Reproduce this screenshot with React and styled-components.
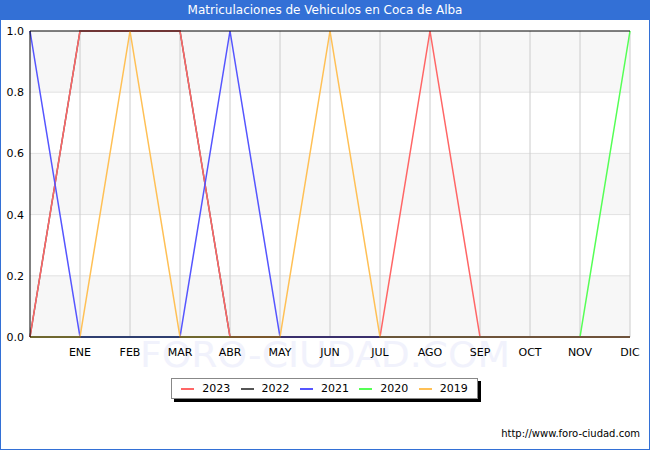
import React from "react";
import styled, { createGlobalStyle } from "styled-components";

const Global = createGlobalStyle`
  html, body { margin: 0; padding: 0; background: #fff; }
  body { font-family: "DejaVu Sans", sans-serif; }
`;

const Frame = styled.div`
  width: 650px; height: 450px; box-sizing: border-box;
  border: 1px solid #3370d6; position: relative; background: #fff;
  display: flex; flex-direction: column;
`;
const TitleBar = styled.div`
  height: 20px; background: #3370d6; color: #fff;
  font-size: 12px; display: flex; align-items: center; justify-content: center;
  margin: -1px -1px 0;
`;
const Chart = styled.svg`
  display: block; position: absolute; left: -1px; top: -20px;
`;
const Body = styled.div`
  flex: 1; position: relative;
`;
const Legend = styled.div`
  position: absolute; left: 170px; top: 358px; width: 307px; height: 21px;
  border: 1px solid #888; background: #fff; box-shadow: 3px 3px 0 #000;
  display: flex; align-items: center; justify-content: space-around;
  padding: 0 4px; box-sizing: border-box; font-size: 11px; color: #000;
`;
const Item = styled.div` display: flex; align-items: center; gap: 8px; `;
const Swatch = styled.span`
  width: 13px; height: 2px; background: ${p => p.c}; display: inline-block;
`;
const Footer = styled.div`
  position: absolute; right: 9px; bottom: 10px; font-size: 10px; color: #000;
`;

const X0 = 30, DX = 50, Y0 = 337, Y1 = 31;
const xs = i => X0 + i * DX;
const ys = v => Y0 - v * (Y0 - Y1);
const months = ["ENE","FEB","MAR","ABR","MAY","JUN","JUL","AGO","SEP","OCT","NOV","DIC"];
const series = [
  { c: "#ff6666", d: [1,1,1,0,0,0,0,1,0,0,0,0] },
  { c: "#555555", d: [1,1,1,0,0,0,0,0,0,0,0,0] },
  { c: "#5555ff", d: [0,0,0,1,0,0,0,0,0,0,0,0], start: 1 },
  { c: "#55ff55", d: [0,0,0,0,0,0,0,0,0,0,0,1] },
  { c: "#ffc055", d: [0,1,0,0,0,1,0,0,0,0,0,0] },
];
const order = [1, 3, 0, 2, 4];

export default function App() {
  return (
    <Frame>
      <Global />
      <TitleBar>Matriculaciones de Vehiculos en Coca de Alba</TitleBar>
      <Body>
        <Chart width="650" height="450" viewBox="0 0 650 450">
          {[0,2,4].map(k => (
            <rect key={k} x={X0} y={ys((k+1)*0.2)} width={600} height={ys(0)-ys(0.2)} fill="#f7f7f7" />
          ))}
          {[0.2,0.4,0.6,0.8].map(v => (
            <line key={v} x1={X0} x2={630} y1={ys(v)} y2={ys(v)} stroke="#e2e2e2" />
          ))}
          {months.map((m, i) => (
            <line key={m} x1={xs(i+1)} x2={xs(i+1)} y1={Y1} y2={Y0} stroke="#cccccc" />
          ))}
          <text x="140" y="367" textLength="370" lengthAdjust="spacingAndGlyphs" fontSize="36" fill="#f1f2fc" fontFamily="DejaVu Sans">FORO-CIUDAD.COM</text>
          {order.map(si => {
            const s = series[si];
            const pts = [[xs(0), ys(s.start || 0)], ...s.d.map((v, i) => [xs(i+1), ys(v)])];
            return <polyline key={si} points={pts.map(p => p.join(",")).join(" ")} fill="none" stroke={s.c} strokeWidth="1.5" />;
          })}
          <polyline points={`${X0},${Y1} ${X0},${Y0} 630,${Y0}`} fill="none" stroke="#000" strokeWidth="1" />
          <line x1={X0} x2={630} y1={Y1} y2={Y1} stroke="#000" />
          {[0,0.2,0.4,0.6,0.8,1].map(v => (
            <text key={v} x="24" y={ys(v)+4} textAnchor="end" fontSize="11" fontFamily="DejaVu Sans">{v.toFixed(1)}</text>
          ))}
          {months.map((m, i) => (
            <text key={m} x={xs(i+1)} y="356" textAnchor="middle" fontSize="11" fontFamily="DejaVu Sans">{m}</text>
          ))}
        </Chart>
        <Legend>
          {["2023","2022","2021","2020","2019"].map((y, i) => (
            <Item key={y}><Swatch c={series[i].c} />{y}</Item>
          ))}
        </Legend>
        <Footer>http://www.foro-ciudad.com</Footer>
      </Body>
    </Frame>
  );
}
